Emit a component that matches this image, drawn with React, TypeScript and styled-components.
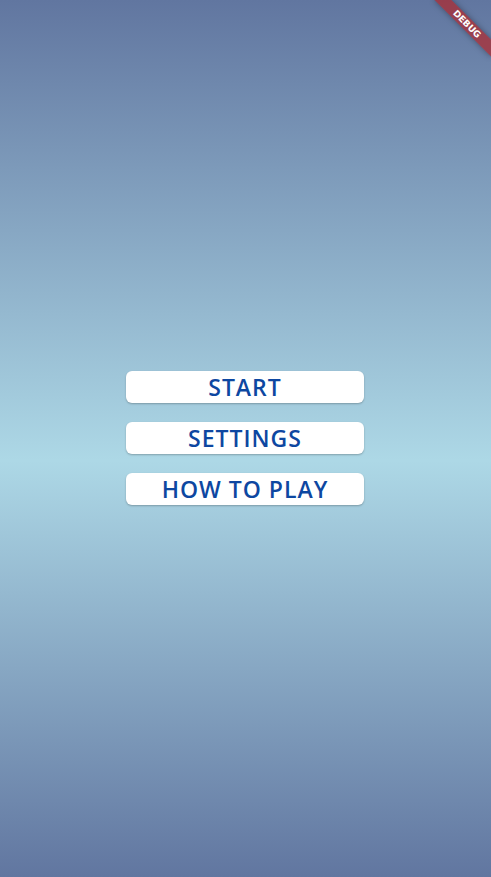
import React from "react";
import styled, { createGlobalStyle } from "styled-components";

const Global = createGlobalStyle`
  html, body { margin: 0; padding: 0; height: 100%; }
  body { font-family: "Open Sans", "Noto Sans", sans-serif; overflow: hidden; }
  #root { height: 100%; }
`;

const Screen = styled.div`
  position: relative;
  box-sizing: border-box;
  width: 491px;
  height: 877px;
  padding: 0 1px 2px 0;
  overflow: hidden;
  background: linear-gradient(
    to bottom,
    #6176a0 0%,
    #add8e6 52.5%,
    #6176a0 100%
  );
  display: flex;
  align-items: center;
  justify-content: center;
`;

const Menu = styled.div`
  display: flex;
  flex-direction: column;
  gap: 19px;
`;

const MenuButton = styled.button`
  width: 238px;
  height: 32px;
  border: none;
  border-radius: 6px;
  background: #ffffff;
  box-shadow: 0 1px 2px rgba(0, 0, 0, 0.25);
  color: #0d47a1;
  font-family: "Open Sans", "Noto Sans", sans-serif;
  font-weight: 600;
  font-size: 23px;
  letter-spacing: 1px;
  line-height: 32px;
  padding: 0;
  text-align: center;
  cursor: pointer;
`;

const Banner = styled.div`
  position: absolute;
  left: 427px;
  top: 18px;
  width: 80px;
  height: 12px;
  transform: rotate(45deg);
  background: rgba(183, 28, 28, 0.63);
  box-shadow: 0 0 6px rgba(0, 0, 0, 0.35);
  color: #ffffff;
  font-family: "DejaVu Sans", sans-serif;
  font-weight: 900;
  font-size: 9px;
  line-height: 12px;
  text-align: center;
`;

export default function App() {
  return (
    <>
      <Global />
      <Screen>
        <Menu>
          <MenuButton>START</MenuButton>
          <MenuButton>SETTINGS</MenuButton>
          <MenuButton>HOW TO PLAY</MenuButton>
        </Menu>
        <Banner>DEBUG</Banner>
      </Screen>
    </>
  );
}
